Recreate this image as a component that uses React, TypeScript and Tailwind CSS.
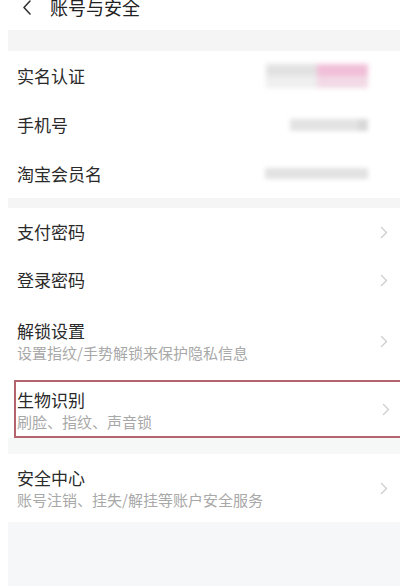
import React from 'react';

const font = { fontFamily: '"Noto Sans CJK SC", "Noto Sans", sans-serif' };

const Chevron = () => (
  <svg width="8" height="13" viewBox="0 0 8 13" className="shrink-0">
    <path d="M1.5 1.5 L6.5 6.5 L1.5 11.5" fill="none" stroke="#cfcfcf" strokeWidth="1.4" strokeLinecap="round" strokeLinejoin="round" />
  </svg>
);

const Gap = ({ h, color = 'bg-[#f5f5f5]' }: { h: string; color?: string }) => (
  <div className="flex bg-white">
    <div className={`ml-2 flex-1 ${h} ${color}`} />
  </div>
);

const InfoRow = ({ label, children }: { label: string; children?: React.ReactNode }) => (
  <div className="h-[49px] flex items-center justify-between pl-[17px] pr-[32px]">
    <span className="text-[17px] leading-[22px] text-[#2a2a2a]">{label}</span>
    {children}
  </div>
);

const LinkRow = ({ label, h }: { label: string; h: string }) => (
  <div className={`${h} flex items-center justify-between pl-[17px] pr-[12px]`}>
    <span className="text-[17px] leading-[22px] text-[#2a2a2a]">{label}</span>
    <Chevron />
  </div>
);

const TwoLineRow = ({ title, sub, h }: { title: string; sub: string; h: string }) => (
  <div className={`${h} flex items-center justify-between pl-[17px] pr-[12px]`}>
    <div className="flex flex-col gap-[1px]">
      <span className="text-[17px] leading-[22px] text-[#2a2a2a]">{title}</span>
      <span className="text-[15px] leading-[20px] text-[#a8a8a8]">{sub}</span>
    </div>
    <Chevron />
  </div>
);

export default function App() {
  return (
    <div className="w-[400px] h-[586px] bg-white overflow-hidden flex flex-col" style={font}>
      {/* header */}
      <div className="h-[30px] flex items-start pl-[22px] gap-[18px]">
        <svg width="10" height="16" viewBox="0 0 10 16">
          <path d="M8 1 L2 7.5 L8 14" fill="none" stroke="#333" strokeWidth="1.6" strokeLinecap="round" strokeLinejoin="round" />
        </svg>
        <span className="text-[18px] leading-[18px] -mt-[2px] text-[#222]">账号与安全</span>
      </div>
      <Gap h="h-[21px]" />

      {/* account info */}
      <div className="flex flex-col">
        <InfoRow label="实名认证">
          <div className="flex blur-[2.5px]">
            <div className="w-[51px] h-[24px] flex flex-col">
              <div className="h-[12px] bg-[#e2e2e2]" />
              <div className="h-[12px] bg-[#efefef]" />
            </div>
            <div className="w-[51px] h-[24px] flex flex-col">
              <div className="h-[12px] bg-[#f1bfd8]" />
              <div className="h-[12px] bg-[#f2d9e5]" />
            </div>
          </div>
        </InfoRow>
        <InfoRow label="手机号">
          <div className="flex blur-[2px]">
            <div className="w-[68px] h-[12px] bg-[#e3e3e3]" />
            <div className="w-[10px] h-[12px] bg-[#d9d9d9]" />
          </div>
        </InfoRow>
        <InfoRow label="淘宝会员名">
          <div className="w-[103px] h-[11px] bg-[#e2e2e2] blur-[2px]" />
        </InfoRow>
      </div>
      <Gap h="h-[10px]" />

      {/* security */}
      <div className="flex flex-col">
        <LinkRow label="支付密码" h="h-[48px]" />
        <LinkRow label="登录密码" h="h-[48px]" />
        <TwoLineRow title="解锁设置" sub="设置指纹/手势解锁来保护隐私信息" h="h-[74px]" />
        <div className="pt-[2px] pl-[14px]">
          <div className="h-[58px] border-2 border-r-0 border-[#b3646d] flex items-center justify-between pl-[1px] pr-[10px]">
            <div className="flex flex-col gap-[1px] pt-[2px]">
              <span className="text-[17px] leading-[22px] text-[#2a2a2a]">生物识别</span>
              <span className="text-[15px] leading-[20px] text-[#a8a8a8]">刷脸、指纹、声音锁</span>
            </div>
            <Chevron />
          </div>
        </div>
      </div>
      <Gap h="h-[16px]" color="bg-[#f6f8f8]" />

      <TwoLineRow title="安全中心" sub="账号注销、挂失/解挂等账户安全服务" h="h-[68px]" />

      <div className="flex-1 flex bg-white">
        <div className="ml-2 flex-1 bg-[#f6f7f9]" />
      </div>
    </div>
  );
}
